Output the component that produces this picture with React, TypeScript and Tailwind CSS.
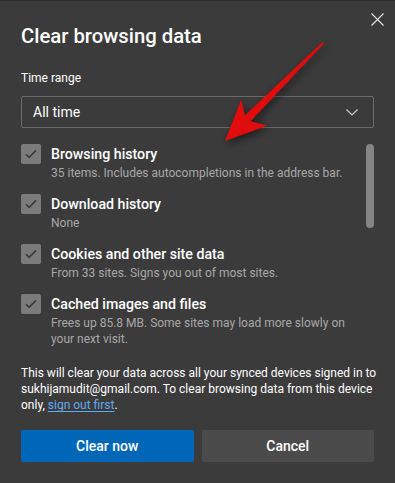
import React from "react";

const items = [
  { title: "Browsing history", desc: ["35 items. Includes autocompletions in the address bar."] },
  { title: "Download history", desc: ["None"] },
  { title: "Cookies and other site data", desc: ["From 33 sites. Signs you out of most sites."] },
  {
    title: "Cached images and files",
    desc: ["Frees up 85.8 MB. Some sites may load more slowly on", "your next visit."],
  },
];

function Check() {
  return (
    <div className="flex h-5 w-5 shrink-0 items-center justify-center rounded-[2px] bg-[#7b7b7b]">
      <svg width="12" height="10" viewBox="0 0 12 10" fill="none">
        <path d="M1 5.2 L4.2 8.4 L11 1.4" stroke="#3a3a3a" strokeWidth="1.6" />
      </svg>
    </div>
  );
}

export default function App() {
  return (
    <div
      className="relative h-[483px] w-[395px] overflow-hidden border-t border-[#2c2c2c] bg-[#3b3b3b] text-white"
      style={{ fontFamily: 'Roboto, "Noto Sans", sans-serif' }}
    >
      <button className="absolute right-[11px] top-[12px] p-0">
        <svg width="13" height="13" viewBox="0 0 13 13">
          <path d="M0.5 0.5 L12.5 12.5 M12.5 0.5 L0.5 12.5" stroke="#e6e6e6" strokeWidth="1.1" />
        </svg>
      </button>

      <div className="px-[21px] pt-[22px]">
        <h1 className="text-[20.3px] font-medium leading-[26px]">Clear browsing data</h1>

        <div className="mt-[20px] text-[12px] leading-[18px]">Time range</div>
        <div className="mt-[9px] flex h-[32px] items-center justify-between rounded-[2px] border border-[#6b6b6b] pl-[11px] pr-[15px]">
          <span className="text-[14px]">All time</span>
          <svg width="12" height="7" viewBox="0 0 12 7" fill="none">
            <path d="M0.5 0.5 L6 6 L11.5 0.5" stroke="#d0d0d0" strokeWidth="1.1" />
          </svg>
        </div>

        <div className="relative mt-[16px] flex flex-col gap-[13px]">
          {items.map((it) => (
            <div key={it.title} className="flex gap-[10px]">
              <Check />
              <div className="whitespace-nowrap">
                <div className="text-[14.2px] font-medium leading-[20px]">{it.title}</div>
                <div className="mt-[1px] text-[12px] leading-[16px] text-[#a8a8a8]">
                  {it.desc.map((d) => (
                    <div key={d}>{d}</div>
                  ))}
                </div>
              </div>
            </div>
          ))}
          <div className="absolute right-0 top-0 h-[84px] w-[8px] rounded-full bg-[#858585]" />
        </div>

        <div className="mt-[18px] whitespace-nowrap text-[12px] leading-[16px]">
          <div>This will clear your data across all your synced devices signed in to</div>
          <div>sukhijamudit@gmail.com. To clear browsing data from this device</div>
          <div>
            only, <a className="text-[#63a9f0] underline underline-offset-2">sign out first</a>.
          </div>
        </div>

        <div className="mt-[17px] flex gap-[8px]">
          <button className="h-[32px] flex-1 rounded-[2px] bg-[#0067b8] text-[14px] font-medium">Clear now</button>
          <button className="h-[32px] flex-1 rounded-[2px] bg-[#4b4b4b] text-[14px] font-medium">Cancel</button>
        </div>
      </div>

      <svg className="pointer-events-none absolute left-0 top-0" width="395" height="483" viewBox="0 0 395 483">
        <defs>
          <filter id="sh" x="-20%" y="-20%" width="140%" height="140%">
            <feDropShadow dx="2" dy="3" stdDeviation="4" floodColor="#000" floodOpacity="0.55" />
          </filter>
        </defs>
        <polygon
          points="225,140 241.3,98.3 244.8,114.5 322.6,41 324,42.4 250.5,120.2 267.4,124.4"
          fill="#df0808"
          filter="url(#sh)"
        />
      </svg>
    </div>
  );
}
